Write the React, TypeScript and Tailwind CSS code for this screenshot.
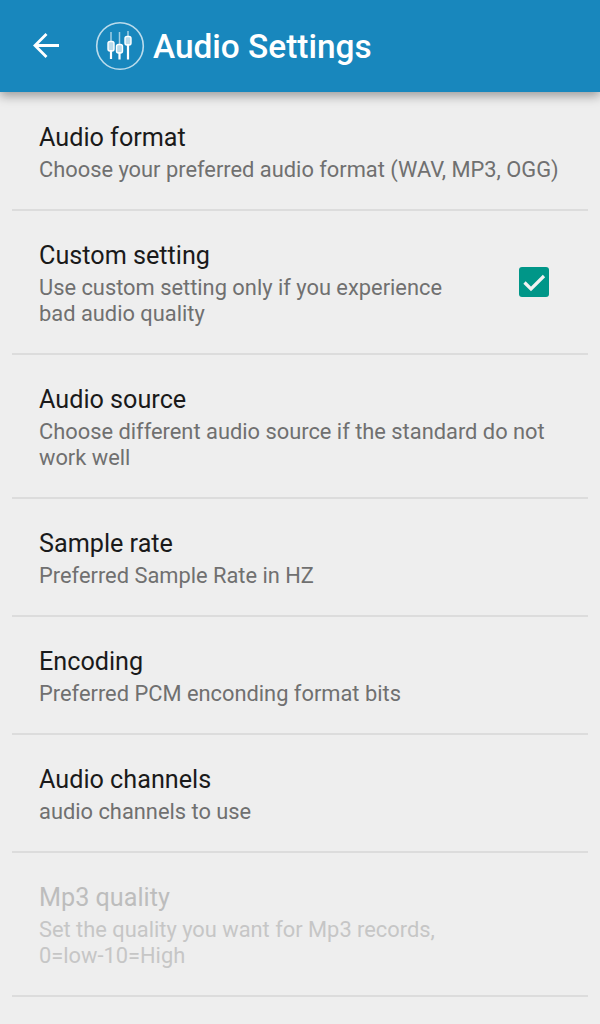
const rows = [
  { t: "Audio format", d: ["Choose your preferred audio format (WAV, MP3, OGG)"] },
  { t: "Custom setting", d: ["Use custom setting only if you experience", "bad audio quality"], check: true },
  { t: "Audio source", d: ["Choose different audio source if the standard do not", "work well"] },
  { t: "Sample rate", d: ["Preferred Sample Rate in HZ"] },
  { t: "Encoding", d: ["Preferred PCM enconding format bits"] },
  { t: "Audio channels", d: ["audio channels to use"] },
  { t: "Mp3 quality", d: ["Set the quality you want for Mp3 records,", "0=low-10=High"], off: true },
];

function Row({ r }: { r: (typeof rows)[number] }) {
  return (
    <div className="mx-3 border-b-2 border-[#dcdcdc] pl-[27px] pt-[26px] pb-[26px] relative">
      <div className={`text-[25.2px] leading-[37px] h-[38px] ${r.off ? "text-[#bdbdbd]" : "text-[#1a1a1a]"}`}>{r.t}</div>
      <div className={`text-[21.85px] leading-[26px] ${r.off ? "text-[#c6c6c6]" : "text-[#707070]"}`}>
        {r.d.map((l) => (
          <div key={l} className="whitespace-nowrap">{l}</div>
        ))}
      </div>
      {r.check && (
        <div className="absolute left-[507px] top-[56px] w-[30px] h-[30px] rounded-[3px] bg-[#009688] flex items-center justify-center">
          <svg width="30" height="30" viewBox="0 0 30 30" fill="none">
            <path d="M5.500 15.500l6.500 6.500L25 9" stroke="#f2f2f2" strokeWidth="3.200" />
          </svg>
        </div>
      )}
    </div>
  );
}

export default function App() {
  return (
    <div className="w-[600px] h-[1024px] overflow-hidden bg-[#eeeeee] relative font-['Roboto',sans-serif]">
      <div className="h-[92px] bg-[#1887bd] flex items-center relative z-10 shadow-[0_4px_10px_rgba(0,0,0,0.35)]">
        <svg className="ml-[32px]" width="28" height="28" viewBox="0 0 28 28" fill="none" stroke="white" strokeWidth="2.800">
          <path d="M27 13.500H3M14.500 2L3 13.500 14.500 25" />
        </svg>
        <svg className="ml-[35px] -mt-[1px]" width="50" height="50" viewBox="0 0 50 50" fill="none" stroke="white">
          <circle cx="25" cy="25" r="23.300" strokeWidth="1.600" opacity="0.7" />
          <path d="M16 11v10M24.500 11v13M33 10v6" strokeWidth="1.500" opacity="0.6" />
          <path d="M16 29v9M24.500 31v7.500M33 23v15.500" strokeWidth="2.200" />
          <rect x="13" y="20.500" width="6" height="9.500" rx="2" fill="white" fillOpacity="0.7" strokeWidth="1.400" />
          <rect x="21.500" y="23.500" width="6" height="8.500" rx="2" fill="white" fillOpacity="0.7" strokeWidth="1.400" />
          <rect x="30" y="15.500" width="6" height="8.500" rx="2" fill="white" fillOpacity="0.7" strokeWidth="1.400" />
        </svg>
        <div className="ml-[8px] mt-[1px] text-white text-[33.4px] font-medium leading-none">Audio Settings</div>
      </div>
      <div className="pt-[1px]">
        {rows.map((r) => (
          <Row key={r.t} r={r} />
        ))}
      </div>
    </div>
  );
}
